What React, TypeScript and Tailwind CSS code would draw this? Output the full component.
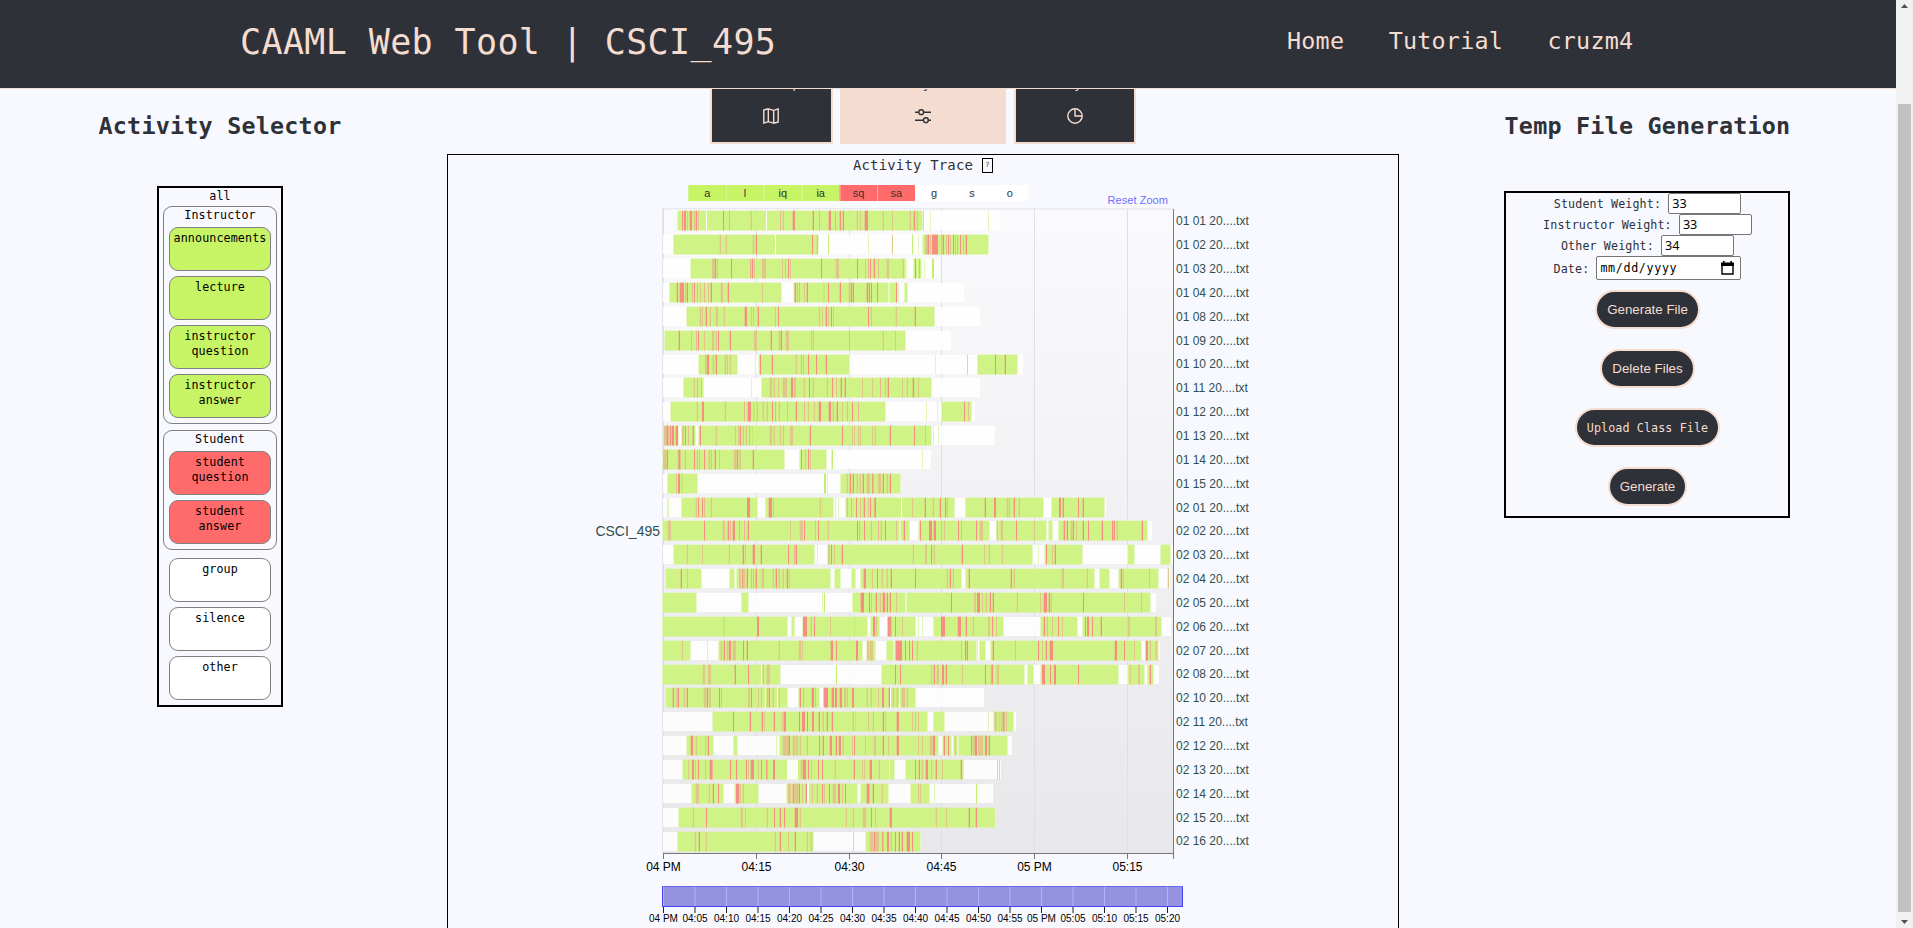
import React from "react";

const MONO = "font-['DejaVu_Sans_Mono',monospace]";
const ARIAL = '"Liberation Sans", Arial, sans-serif';

/*
 * Trace rows. Positions are in thirds of a pixel from x = 650.
 * g: activity span (start-end); w: blank, l: lime, r: red, p: pink, t: tan mark (position[+width]).
 */
type Row = { label: string; start: number; end: number; marks: string };
const rows: Row[] = [
  { label: "01 01", start: 85, end: 1050, marks: "g85-815 w168 w348 r97 r103+6 t111 r120+6 t132 r138 t145 r219 p237 t304 p391 t400 r430+5 r490 p507 r538+5 p555 r570 r578 t622 t631 r646+9 t700 t727 r792 t802 t780 l820 q840 q1013" },
  { label: "01 02", start: 39, end: 1014, marks: "g72-505 w375 t210 t228 t310 r318 r485 t500 l535+4 q655 t727 l787 q805 g818-1014 t825+9 r834 t840 r847+18 t873 r880 t887 r893 t901 r909 t915 p921 r931 t939 r948" },
  { label: "01 03", start: 39, end: 870, marks: "g123-767 t187+9 r195 t200 r243 p300 r306 t312 t335+12 t397 t405 r415 t421 r513 t558+8 r621 t645 p655 r661 r672 t685 t712+7 t758 q766 g793-800 r795 g803-813 p808 q822 l847+5" },
  { label: "01 04", start: 39, end: 941, marks: "g60-393 r82 r90+12 t105 r112 t126 r133 p140 t149 p162 t175 r184 t214+5 r234 t335 g432-713 r434 t440 p446 t463 r470 l520+6 r535 r570 t596 r604 r610 r650 r656 r663 r681 g720-740 r737 q745 g765-771" },
  { label: "01 08", start: 39, end: 990, marks: "g110-853 t150 t156 r168 t180 t198+5 t222 r286+5 t303 t309 r324 t375 r385 t508 t515 r528 t535 r543 t549 r655 t664 t738 r796" },
  { label: "01 09", start: 45, end: 903, marks: "g46-765 r88 t123 p138 r145 t163 t187+6 t198 r205 r240 t313+9 r364 t386 r394 t408+8 t483 t490 p597 t698 t735" },
  { label: "01 10", start: 39, end: 1120, marks: "g147-261 p166 r172+5 t190 r198 t226 t232 t240 q314 g327-597 r331 r366 t438 p453 t459 r475 r499 r528 q856 l951 g984-1101 r1035 r1066" },
  { label: "01 11", start: 39, end: 990, marks: "g102-159 t132 p142 t153 q304 g337-843 t360+5 t372 t385 t398+12 r423+6 t432+5 t462 r477 t490 t532 r547+4 t557 r572 r586 t637 t667 p690 t705 r714 t755 t772 r788 l791 t803" },
  { label: "01 12", start: 39, end: 975, marks: "g63-705 t140 r157+5 t226 p283 r294+9 l310+6 t320+4 t338 t350 r367 p375 t386 t411 r438 p461 t475 t491 r508+5 r538+6 t550 r562 t575 p590 r605 p625 q829 q860 g876-963 r943 t955" },
  { label: "01 13", start: 39, end: 1034, marks: "g42-84 t42+16 r50 r60 r66+6 r78+5 g96-135 t97+6 r105 t115 r130 g148-843 r150 t198 t255 t263 r270 t280 t288 p296 l307+4 t360+5 t372 t390 t400 t421+8 r480 r577 t607 t613 t623 t630 t665 t674 r720 r793 t825 q849 q864" },
  { label: "01 14", start: 39, end: 843, marks: "g39-402 t39+10 r52 t84+8 r88 t104 r133 t140 t147 r163 t176 t182 r196 t207 t252+7 r262 t268+6 r310 g450-528 r453 t465 r473 t481 q543 l547 q817" },
  { label: "01 15", start: 39, end: 750, marks: "g54-141 t77 r83 r88 l92+7 l522+5 q531 g573-750 t592 r600 r610 t620 t630 r638 t650+9 r665 t670 t685+8 r700 t710 r720+3" },
  { label: "02 01", start: 39, end: 1367, marks: "q52+6 g95-321 t138 r143+4 r157 p161 t184 r291+9 g348-549 r358+8 t369 t510+4 l516 q554 q564 g587-912 t590 p603 r617 t631 r642 t655 r661 t671 r676 w753 t785 r826 t848 r870 r885 t892 g948-1179 r1006 r1033+5 t1070 t1078 r1092 t1106 g1206-1361 r1227+7 r1240 r1285 r1300" },
  { label: "02 02", start: 39, end: 1505, marks: "g39-747 t54+9 r163 t220+5 r234 p240 r250+5 p268 p283 r294+4 t421 t450+8 r463 t495 r505 t534 r621 p628 r641 t662 p685 t694 r705 t737 q750 g754-777 r762 g807-1017 r811 r837+9 r852+5 t873 t883 r925 p932 r979 t990+8 g1041-1188 t1042 t1052+5 r1097 t1153 g1197-1206 g1228-1491 r1242+4 r1252+4 t1262 r1270 t1277 r1300 r1315 r1356 r1385 r1392 t1400 r1476" },
  { label: "02 03", start: 39, end: 1569, marks: "g72-492 t110 t155 t236 r278 t286 r308 r313 r334 r415 p431 r438 q500 g534-1147 t535+5 r543 t553 r576 t790 t825+6 r843 t852 r936+4 t1001 t1018 t1056+4 q1164 g1185-1296 r1187+4 t1205 r1216 g1434-1452 g1533-1560" },
  { label: "02 04", start: 45, end: 1560, marks: "g48-153 r92 t111 g240-252 g260-540 t267+6 r275 t280+6 r290 p302 p310 r318 t336+6 t370 r378 t388 t400 r412 t418 g555-570 g606-615 g633-933 r642+5 t665 r681 t696 t710 r724 r795+4 t890 r900 t908 g948-1332 r956 r1084 t1092 t1236+5 t1310 g1350-1377 g1407-1524 r1412+4 t1420 t1497 t1554" },
  { label: "02 05", start: 39, end: 1517, marks: "g39-138 g276-294 q517 l522 g609-765 r634+8 r657 t663 r678 t690 r700+5 r712 r720 t737 g771-1500 r903 t973+5 r981+8 t997 t1008 r1020 r1030+4 t1100 t1171+4 r1182+8 r1198 t1204 r1299 t1423+4 t1473" },
  { label: "02 06", start: 39, end: 1562, marks: "g39-411 l219+5 r321+6 g426-432 g458-651 r459+12 t484 r493 t541 l612 g663-687 r669+5 t678 g714-795 r714+8 t724 r735 t755 q803 q815 g851-1059 r873+13 r924+9 r948 t970 t1015+5 r1025 t1037 g1172-1280 r1182+4 t1192 t1205 r1225+4 t1235 g1299-1533 r1305 r1311+5 r1325 r1354 t1434+5 t1515+5" },
  { label: "02 07", start: 39, end: 1530, marks: "g39-120 t97 q172 g208-636 t214 r222 t230 r236+6 t250+8 r279 r290 t388 t448+5 t456+4 r542+7 r559 r617+6 g651-675 t651+6 t660+8 g711-728 g736-978 r738+18 r765 r777 r787 t800 t933 r945 r950 q982 g990-1005 g1023-1473 r1028+4 t1095 r1165 t1175 r1188 r1200+8 r1396+5 r1423 t1453+4 g1487-1523 r1488+6 t1500 t1518" },
  { label: "02 08", start: 39, end: 1527, marks: "g39-390 t160+7 t173+8 r256 r293 w334 t340 t350+8 l558 g697-1122 r735 r751 t843 r852+4 t862+6 r875+5 r888+4 t937 r1005 t1022 r1026 t1040+5 g1133-1150 g1173-1404 r1175+10 r1201 r1211+5 r1285 g1434-1482 t1440 t1463+5 g1494-1510 r1500" },
  { label: "02 10", start: 45, end: 1001, marks: "g48-411 r70 t77 r84 t102 r110 t162+6 r172 t176+6 r207 p213 t293+6 r303 t325 t333 w346 t350 r358 t370 w382 t388 g447-507 r450 p459 r486+5 t495 g522-795 r522+12 r546+5 r555+6 r570+5 t583+5 t592 r607+5 t652 t662 t683 r695+5 r716 w720 t728 t740 w748 t756+8 t770+4" },
  { label: "02 11", start: 39, end: 1097, marks: "g189-831 r249 r300+4 r336 t343 r372 t395 r402+6 r447 r457+8 r471 r487+5 r506 t520 r530 r546 t610 l616 t655 t668 r700 t705 r740+5 t785 t795 t805 g851-882 q1013 g1032-1089 t1036+6 l1044+6 t1052 r1058 t1063 t1068" },
  { label: "02 12", start: 39, end: 1085, marks: "g112-189 r122+6 t138 t165 r174 g252-261 q378 g390-865 t400+18 r418 t428+6 t438+5 t450 t470 r507 r520 r540+6 r558 r568+6 t580 t605 r613 t645 t672+5 r700 t715 r742+5 t803 t815 t840+5 r850+6 g880-903 r882 r893 g913-922 t914 g928-1071 r963+4 t970+6 r975+6 t985+16 r1005+6 r1018+3" },
  { label: "02 13", start: 39, end: 1053, marks: "g100-717 t115 r127+5 t135 r145 t165 r180+5 p185 r241 t257 r259 r289 t293 r302+10 t325 r333 r347 t352 r369+5 w411+34 t452 r460+10 r473+4 t483 r505+4 r515 t556 r612 t637 t643 r660+6 t688 g720-732 g768-939 r795+4 r808 t816 r828+6 t843 r858 t875 r934 l1040 l1046" },
  { label: "02 14", start: 39, end: 1029, marks: "g125-219 t138+8 t178 r190 r203 g255-323 r259+8 t270 t278 g412-620 t415+10 r428 t432+12 r448 t455 r468 w472+6 t485 t500 r515 t523 r537+4 t548+8 r565+5 t575 r585 g633-715 r650+6 t657 r668 t696 g784-837 t803 t810 q853 l978" },
  { label: "02 15", start: 39, end: 1035, marks: "g87-1035 t130 r167+4 t272+6 t285 t350 r371 r390+4 r403 r436+8 t450 t588 t608 t640+8 r663 t675 r720+6 t858 t889+4 r958 r978" },
  { label: "02 16", start: 39, end: 810, marks: "g84-489 t136 r148 t168 t376 r390 t415 r434 t470 t484 l610+4 g648-810 t660+8 r672 t675+12 r695 t700 r711+6 t722 r735+4 r748 r756 r770+10 r787" },
];

const COLORS: Record<string, string> = {
  g: "#cff384", w: "#fdfdf8", l: "#c3ee72", q: "#e2f5bd", r: "#f68e83", p: "#ebb692", t: "#dfc68a",
};

const px = (u: number) => 650 + Math.round(u / 3);
const grid = [40, 318, 596, 874, 1152, 1430];
const majors = ["04 PM", "04:15", "04:30", "04:45", "05 PM", "05:15"];
const minors = ["04 PM", "04:05", "04:10", "04:15", "04:20", "04:25", "04:30", "04:35", "04:40", "04:45", "04:50", "04:55", "05 PM", "05:05", "05:10", "05:15", "05:20"];
const legend = ["a", "l", "iq", "ia", "sq", "sa", "g", "s", "o"];

function TraceRow({ row, index }: { row: Row; index: number }) {
  const y = Math.round(211.4 + index * 23.85);
  return (
    <g>
      <rect x={px(row.start)} y={y} width={px(row.end) - px(row.start)} height={19} fill="#fff" fillOpacity={0.86} />
      {row.marks.split(" ").map((m, i) => {
        const kind = m[0];
        const [a, b] = m.slice(1).split(/[-+]/).map(Number);
        const x = px(a);
        if (kind === "g") {
          return (
            <g key={i}>
              <rect x={x - 1} y={y} width={px(b) - x + 2} height={19} fill="#e6f7c4" />
              <rect x={x} y={y - 0.3} width={px(b) - x} height={19.8} fill={COLORS.g} />
            </g>
          );
        }
        const w = Math.max(1, Math.round((b || 3) / 3));
        return (
          <g key={i} fill={COLORS[kind]}>
            {"rt".includes(kind) && a % 2 === 0 && <rect x={x - 1} y={y} width={w + 1} height={19} fillOpacity={0.3} />}
            <rect x={x} y={y - 0.3} width={w} height={19.8} />
          </g>
        );
      })}
    </g>
  );
}

function Chart() {
  return (
    <svg className="absolute inset-x-0 top-[25px] block" width={950} height={748} viewBox="448 180 950 748" fontFamily={ARIAL}>
      <defs>
        <linearGradient id="plot" x1="0" y1="0" x2="0" y2="1">
          <stop offset="0" stopColor="#fafafc" />
          <stop offset="1" stopColor="#e8e8ea" />
        </linearGradient>
      </defs>
      {legend.map((t, i) => {
        const x = 688.3 + i * 37.8;
        return (
          <g key={t}>
            <rect x={x} y={185} width={37.8} height={16} fill={i < 4 ? "#c6f464" : i < 6 ? "#ff6b6b" : "#fff"} />
            {i > 0 && i < 6 && <rect x={Math.round(x)} y={185} width={1} height={16} fill="#fff" fillOpacity={0.25} />}
            <text x={x + 19} y={197} fontSize={11} textAnchor="middle" fill="#333">{t}</text>
          </g>
        );
      })}
      <text x={1168} y={204} fontSize={11.1} textAnchor="end" fill="#6f6fff">Reset Zoom</text>
      <rect x={663} y={209} width={511} height={644} fill="url(#plot)" />
      <rect x={662} y={208} width={511} height={1.5} fill="#e9e9ef" />
      <rect x={662} y={208} width={1.5} height={645} fill="#e6e6ec" />
      {grid.map((u) => <rect key={u} x={px(u)} y={209} width={1} height={644} fill="#e0e0e3" />)}
      {rows.map((row, i) => <TraceRow key={row.label} row={row} index={i} />)}
      {rows.map((row, i) => (
        <text key={row.label} x={1176} y={225.3 + i * 23.85} fontSize={12} fill="#2f4f4f">{row.label} 20....txt</text>
      ))}
      <text x={660} y={536} fontSize={14} textAnchor="end" fill="#2f4f4f">CSCI_495</text>
      <path d="M663 853.5H1173.5M1173.5 209V859" stroke="#777" fill="none" />
      {grid.map((u, i) => (
        <g key={u}>
          <rect x={px(u)} y={853} width={1} height={6} fill="#777" />
          <text x={px(u) + 0.5} y={871} fontSize={12} textAnchor="middle">{majors[i]}</text>
        </g>
      ))}
      <rect x={662.5} y={886.5} width={520} height={20} fill="#9593e0" stroke="#4343f2" />
      <rect x={662} y={886} width={521} height={1} fill="#6767f3" />
      {minors.map((t, i) => {
        const x = 663 + i * 31.5;
        return (
          <g key={t}>
            <rect x={x} y={887} width={1} height={19} fill="#b5b3f8" />
            <rect x={x} y={907} width={1} height={6} fill="#222" />
            <text x={x + 0.5} y={922} fontSize={10} textAnchor="middle">{t}</text>
          </g>
        );
      })}
    </svg>
  );
}

function Icon({ children }: { children: React.ReactNode }) {
  return (
    <svg width="16" height="16" viewBox="0 0 16 16" fill="none" stroke="currentColor" strokeWidth="1.4" strokeLinejoin="round">
      {children}
    </svg>
  );
}

function Tab({ label, active, className, children }: { label: string; active?: boolean; className: string; children: React.ReactNode }) {
  return (
    <button
      className={`flex h-[80px] flex-col items-center justify-end border-2 border-[#f4ddd0] pb-[18px] text-[11.7px] leading-[15px] tracking-[0.11px] ${
        active ? "bg-[#f4ddd0] text-[#2f3138]" : "bg-[#2f3138] text-[#f4ddd0]"
      } ${className}`}
    >
      <span className="mb-[16px]">{label}</span>
      {children}
    </button>
  );
}

function Item({ children, tone }: { children: React.ReactNode; tone: string }) {
  return <div className={`mx-auto h-[44px] w-[102px] rounded-[9px] border border-[#808080] px-[3px] pt-[3px] ${tone}`}>{children}</div>;
}

function Pill({ children, className }: { children: React.ReactNode; className: string }) {
  return (
    <button className={`flex h-[39px] items-center justify-center rounded-full border-2 border-[#f4ddd0] bg-[#2f3138] whitespace-nowrap text-[#f4ddd0] ${className}`}>
      {children}
    </button>
  );
}

function Weight({ label, value }: { label: string; value: string }) {
  return (
    <label className="flex h-[21px] items-center justify-center">
      <span className="pt-[2px] whitespace-pre">{label}: </span>
      <input className="h-[21px] w-[73px] rounded-[2px] border border-[#767676] bg-white px-[3px] font-['Noto_Sans',sans-serif] text-[12.6px] tracking-normal text-black" defaultValue={value} />
    </label>
  );
}

const GREEN = "bg-[#c7f464]";
const RED = "bg-[#ff6b6b]";

export default function App() {
  return (
    <div className={`flex h-[928px] w-[1913px] overflow-hidden bg-[#f8f9ff] text-[#2f3138] ${MONO}`}>
      <div className="flex w-[1896px] flex-col">
        <header className="z-10 flex h-[89px] shrink-0 items-center border-b border-[#f4ddd0] bg-[#2f3138] pl-[240px] text-[#f4ddd0]">
          <h1 className="mt-[-3px] w-[1047px] text-[35px] leading-none tracking-[0.38px]">CAAML Web Tool | CSCI_495</h1>
          <nav className="mt-[-4px] flex gap-[44.5px] text-[23.4px] leading-none tracking-[0.21px]">
            <a>Home</a>
            <a>Tutorial</a>
            <a>cruzm4</a>
          </nav>
        </header>

        <main className="flex min-h-0 flex-1">
          <section className="flex w-[440px] shrink-0 flex-col items-center">
            <h2 className="mt-[24px] text-[23.4px] leading-[26px] font-bold tracking-[0.21px]">Activity Selector</h2>
            <div className="mt-[47px] h-[521px] w-[126px] border-2 border-black pt-[1px] text-center text-[11.7px] leading-[15px] tracking-[0.11px] text-black">
              <div className="h-[17px]">all</div>
              <div className="mx-[4px] flex h-[218px] flex-col gap-[5px] rounded-[9px] border border-[#808080]">
                <div className="h-[15px] pt-[1px]">Instructor</div>
                <Item tone={GREEN}>announcements</Item>
                <Item tone={GREEN}>lecture</Item>
                <Item tone={GREEN}>instructor question</Item>
                <Item tone={GREEN}>instructor answer</Item>
              </div>
              <div className="mx-[4px] mt-[6px] flex h-[120px] flex-col gap-[5px] rounded-[9px] border border-[#808080]">
                <div className="h-[15px] pt-[1px]">Student</div>
                <Item tone={RED}>student question</Item>
                <Item tone={RED}>student answer</Item>
              </div>
              <div className="mt-[8px] flex flex-col gap-[5px]">
                <Item tone="bg-white">group</Item>
                <Item tone="bg-white">silence</Item>
                <Item tone="bg-white">other</Item>
              </div>
            </div>
          </section>

          <section className="ml-[7px] w-[952px] shrink-0">
            <div className="mt-[-25px] ml-[263px] flex">
              <Tab label="Heat Map" className="w-[123px] pr-[1px]">
                <Icon>
                  <path d="M.8 2 5.3.8 10.7 2.3 15.2.8V14L10.7 15.2 5.3 13.7.8 15.2zM5.3.8V13.7M10.7 2.3V15.2" />
                </Icon>
              </Tab>
              <Tab label="Activity Trace" active className="ml-[7px] w-[166px]">
                <Icon>
                  <path d="M0 4.2h3.7M8.7 4.2H16M0 12.2h8.4M13.4 12.2H16" />
                  <circle cx="6.2" cy="4.2" r="2.4" />
                  <circle cx="10.9" cy="12.2" r="2.4" />
                </Icon>
              </Tab>
              <Tab label="Analysis" className="ml-[8px] w-[122px] pr-[1px]">
                <Icon>
                  <circle cx="8" cy="8" r="7.2" />
                  <path d="M8 .8V8H15.2" />
                </Icon>
              </Tab>
            </div>
            <div className="relative mt-[10px] h-[800px] border border-black">
              <div className="flex items-center justify-center pt-[2px] text-[14px] leading-[16px] tracking-[0.15px]">
                Activity Trace
                <span className="ml-[9px] flex h-[15px] w-[11px] items-center justify-center border border-black text-[7px]">?</span>
              </div>
              <Chart />
            </div>
          </section>

          <section className="flex flex-1 flex-col items-center">
            <h2 className="mt-[24px] text-[23.4px] leading-[26px] font-bold tracking-[0.21px]">Temp File Generation</h2>
            <div className="mt-[52px] mr-[1px] h-[327px] w-[286px] border-2 border-black text-[11.7px] leading-[15px] tracking-[0.11px]">
              <div className="pl-[1px]">
                <Weight label="Student Weight" value="33" />
                <Weight label="Instructor Weight" value="33" />
                <Weight label="Other Weight" value="34" />
                <div className="flex h-[24px] items-center justify-center">
                  <span className="pt-[2px] whitespace-pre">Date: </span>
                  <div className="flex h-[24px] w-[145px] items-center justify-between rounded-[2px] border border-[#767676] bg-white pr-[6px] pl-[3px] text-black">
                    <span className="tracking-[0.65px]">mm/dd/yyyy</span>
                    <svg width="13" height="14" viewBox="0 0 13 14">
                      <path d="M1 3h11v10H1z" fill="none" stroke="#000" strokeWidth="1.4" />
                      <path d="M0 1.5h13V5H0zM2 0h1.6v2H2zM9.4 0H11v2H9.4z" />
                    </svg>
                  </div>
                </div>
              </div>
              <div className="mt-[10px] flex flex-col items-center gap-[20px] pl-[1px] font-['Liberation_Sans',Arial,sans-serif] text-[13.33px] tracking-normal">
                <Pill className="w-[105px]">Generate File</Pill>
                <Pill className="w-[95px]">Delete Files</Pill>
                <Pill className="w-[145px] pt-[2px] font-['DejaVu_Sans_Mono',monospace] text-[11.7px] tracking-[0.11px]">Upload Class File</Pill>
                <Pill className="w-[79px]">Generate</Pill>
              </div>
            </div>
          </section>
        </main>
      </div>

      <div className="flex w-[17px] flex-col items-center justify-between bg-[#f1f1f1] py-[4px]">
        <svg width="7" height="4" viewBox="0 0 7 4"><path d="M0 4 3.5 0 7 4z" fill="#505050" /></svg>
        <div className="mt-[96px] mb-[8px] w-[13px] flex-1 bg-[#c1c1c1]" />
        <svg width="7" height="4" viewBox="0 0 7 4"><path d="M0 0 3.5 4 7 0z" fill="#505050" /></svg>
      </div>
    </div>
  );
}
